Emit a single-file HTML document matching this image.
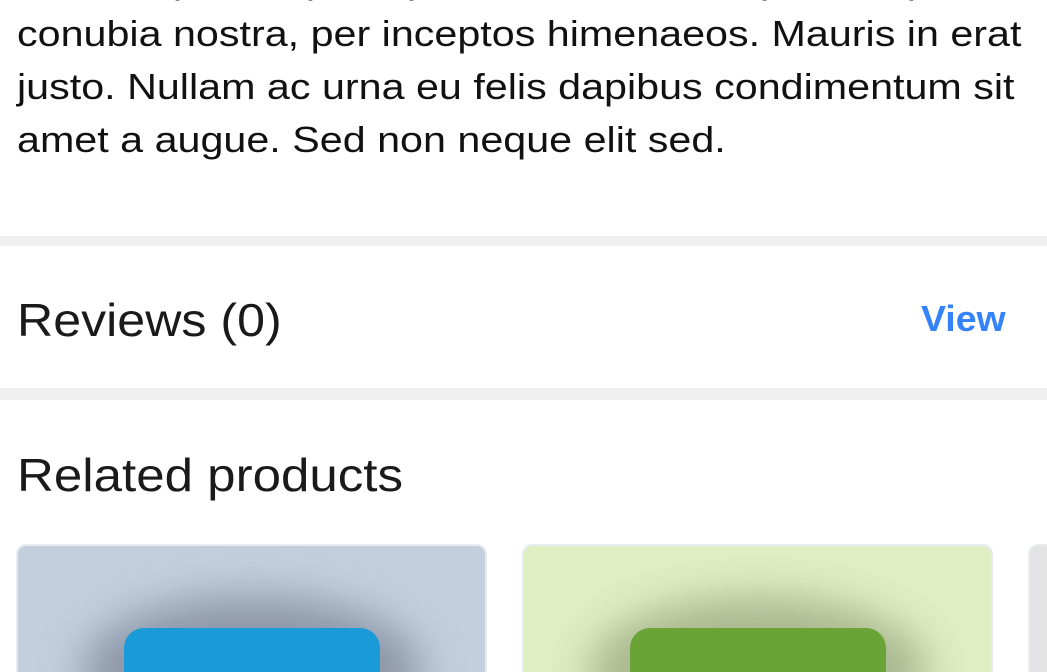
<!DOCTYPE html>
<html><head><meta charset="utf-8"><style>
html,body{margin:0;padding:0;width:1047px;height:672px;overflow:hidden;background:#fff;font-family:"Liberation Sans",sans-serif;color:#111}
.t{position:absolute;left:17px;font-size:36px;white-space:nowrap;transform-origin:0 0;transform:scaleX(1.146)}
.sep{position:absolute;left:0;width:1047px;background:#f0f0f0}
.h{position:absolute;left:17px;font-size:46px;white-space:nowrap;color:#1a1a1a;transform-origin:0 0}
.card{position:absolute;top:544px;width:467px;height:126px;border:2px solid #e8ecf1;border-bottom:none;border-radius:10px 10px 0 0;overflow:hidden}
.shirt{position:absolute;top:82px;width:256px;height:80px;border-radius:20px 20px 0 0;left:50%;transform:translateX(-50%)}
.shadow{position:absolute;top:50px;left:50%;transform:translateX(-50%);width:340px;height:150px;border-radius:50%;filter:blur(20px)}
</style></head><body>
<div class="t" style="top:-40px">ullamcorper torquent per conubia nostra per inceptos</div>
<div class="t" style="top:13px">conubia nostra, per inceptos himenaeos. Mauris in erat</div>
<div class="t" style="top:66px">justo. Nullam ac urna eu felis dapibus condimentum sit</div>
<div class="t" style="top:119px">amet a augue. Sed non neque elit sed.</div>
<div class="sep" style="top:236px;height:10px"></div>
<div class="h" style="top:293px;transform:scaleX(1.09)">Reviews (0)</div>
<div style="position:absolute;left:921px;top:298px;font-size:36px;font-weight:bold;color:#3483fa;transform-origin:0 0;transform:scaleX(1.04)">View</div>
<div class="sep" style="top:388px;height:12px"></div>
<div class="h" style="top:448px;transform:scaleX(1.11)">Related products</div>
<div class="card" style="left:16px;background:#c3cfdd"><div class="shadow" style="background:#8d97a8"></div><div class="shirt" style="background:#1a9ad6"></div></div>
<div class="card" style="left:522px;background:#e0eec4"><div class="shadow" style="background:#a9b890"></div><div class="shirt" style="background:#6aa336"></div></div>
<div class="card" style="left:1028px;background:#e3e3e3"></div>
</body></html>
